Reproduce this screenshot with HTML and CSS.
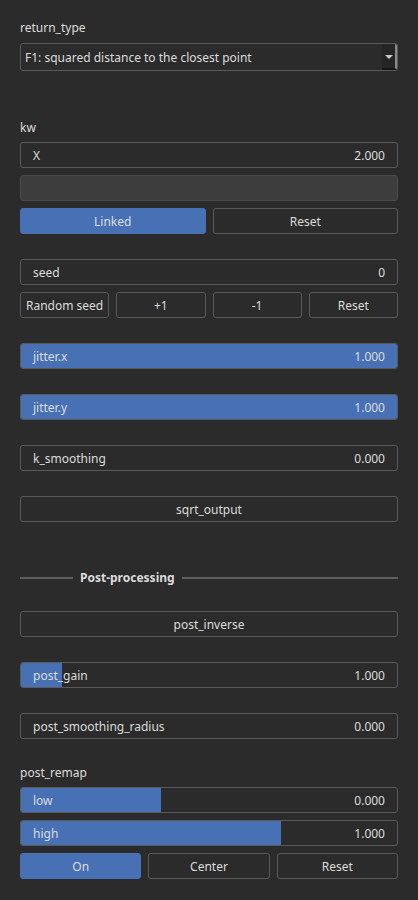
FILE: index.html
```html
<!DOCTYPE html>
<html>
<head>
<meta charset="utf-8">
<link rel="stylesheet" href="styles.css">
</head>
<body>
<div class="panel">
  <div class="label first">return_type</div>
  <div class="combo">
    <span class="combo-text">F1: squared distance to the closest point</span>
    <span class="combo-arrow"><span class="tri"></span></span>
  </div>

  <div class="label kw">kw</div>
  <div class="group">
    <div class="field"><span>X</span><span>2.000</span></div>
    <div class="field empty"></div>
    <div class="row two">
      <div class="btn on">Linked</div>
      <div class="btn">Reset</div>
    </div>
  </div>

  <div class="group sect">
    <div class="field"><span>seed</span><span>0</span></div>
    <div class="row four">
      <div class="btn">Random seed</div>
      <div class="btn">+1</div>
      <div class="btn">-1</div>
      <div class="btn">Reset</div>
    </div>
  </div>

  <div class="field slider sect"><div class="fill" style="width:100%"></div><span>jitter.x</span><span>1.000</span></div>
  <div class="field slider sect"><div class="fill" style="width:100%"></div><span>jitter.y</span><span>1.000</span></div>
  <div class="field sect"><span>k_smoothing</span><span>0.000</span></div>
  <div class="btn wide sect">sqrt_output</div>

  <div class="sep">
    <div class="sep-line short"></div>
    <div class="sep-text">Post-processing</div>
    <div class="sep-line grow"></div>
  </div>

  <div class="btn wide post">post_inverse</div>
  <div class="field slider sect"><div class="fill" style="width:10.8%"></div><span>post_gain</span><span>1.000</span></div>
  <div class="field sect"><span>post_smoothing_radius</span><span>0.000</span></div>

  <div class="label remap">post_remap</div>
  <div class="group">
    <div class="field slider"><div class="fill" style="width:37.3%"></div><span>low</span><span>0.000</span></div>
    <div class="field slider"><div class="fill" style="width:69.2%"></div><span>high</span><span>1.000</span></div>
    <div class="row three">
      <div class="btn on">On</div>
      <div class="btn">Center</div>
      <div class="btn">Reset</div>
    </div>
  </div>
</div>
</body>
</html>
```

FILE: styles.css
```css
html, body {
  margin: 0;
  padding: 0;
  background: #2b2b2b;
}
body {
  font-family: "Noto Sans", "Open Sans", sans-serif;
  font-size: 12px;
  color: #dcdcdc;
}
.panel {
  padding: 0 20px;
  display: flex;
  flex-direction: column;
}
.label {
  height: 18px;
  line-height: 18px;
  font-size: 12px;
  margin-bottom: 5px;
}
.label.first { margin-top: 19px; margin-bottom: 6px; }
.label.kw { margin-top: 48px; }
.label.remap { margin-top: 25px; }

.combo {
  height: 28px;
  box-sizing: border-box;
  border: 1px solid #5a5a5a;
  border-radius: 3px;
  display: flex;
  align-items: center;
  padding-left: 4px;
  overflow: hidden;
}
.combo-text { flex: 1; line-height: 26px; font-size: 12px; padding-top: 1px; }
.combo-arrow {
  width: 15px;
  height: 26px;
  background: #252525;
  border-right: 2px solid #8a8a8a;
  border-bottom: 2px solid #151515;
  box-sizing: border-box;
  display: flex;
  align-items: center;
  justify-content: center;
}
.tri {
  width: 0;
  height: 0;
  border-left: 4px solid transparent;
  border-right: 4px solid transparent;
  border-top: 4px solid #c8c8c8;
  margin-top: 1px;
}

.group {
  display: flex;
  flex-direction: column;
  gap: 7px;
}
.sect { margin-top: 25px; }

.field {
  position: relative;
  height: 26px;
  box-sizing: border-box;
  border: 1px solid #5a5a5a;
  border-radius: 3px;
  display: flex;
  align-items: center;
  justify-content: space-between;
  padding: 0 12px;
  overflow: hidden;
  font-size: 12px;
}
.field span { position: relative; }
.field.empty { background: #3d3d3d; border-color: #4a4a4a; }
.fill {
  position: absolute;
  left: 0;
  top: 0;
  bottom: 0;
  background: #4771b4;
}

.row { display: grid; gap: 7px; }
.row.two { grid-template-columns: 1fr 1fr; }
.row.three { grid-template-columns: 1fr 1fr 1fr; }
.row.four { grid-template-columns: 1fr 1fr 1fr 1fr; }

.btn {
  height: 26px;
  box-sizing: border-box;
  border: 1px solid #5a5a5a;
  border-radius: 3px;
  display: flex;
  align-items: center;
  justify-content: center;
  font-size: 12px;
  white-space: nowrap;
}
.btn.on { background: #4771b4; border-color: #4771b4; }
.btn.post { margin-top: 24px; }

.sep {
  margin-top: 47px;
  height: 18px;
  display: flex;
  align-items: center;
  gap: 7px;
}
.sep-line { height: 2px; background: #5f5f5f; }
.sep-line.short { width: 53px; }
.sep-line.grow { flex: 1; }
.sep-text { font-weight: bold; font-size: 12px; line-height: 18px; }
```
